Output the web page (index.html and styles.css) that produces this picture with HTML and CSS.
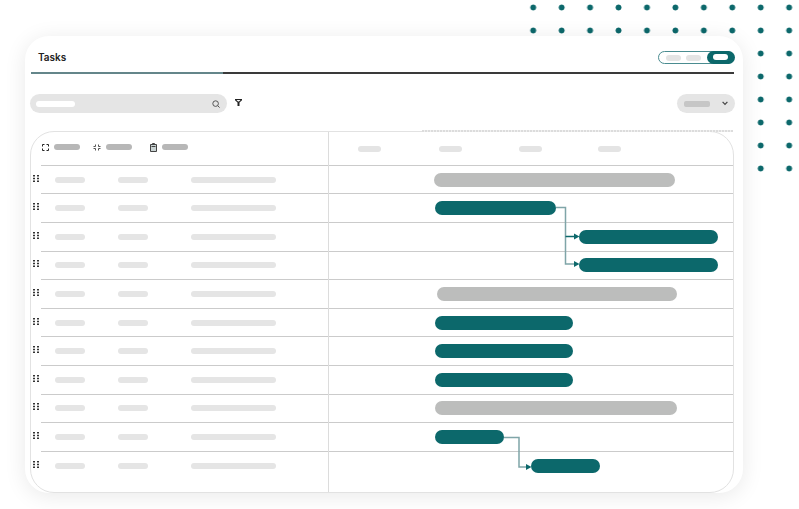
FILE: index.html
```html
<!DOCTYPE html>
<html lang="en">
  <head>
    <meta charset="UTF-8" />
    <title>Tasks</title>
    <link rel="stylesheet" href="styles.css">
  </head>
  <body>
    <svg width="0" height="0" class="defs">
      <symbol id="grip" viewBox="0 0 6 7">
        <rect x="0" y="0" width="2" height="1.500" /><rect x="4" y="0" width="2" height="1.500" />
        <rect x="0" y="2.750" width="2" height="1.500" /><rect x="4" y="2.750" width="2" height="1.500" />
        <rect x="0" y="5.500" width="2" height="1.500" /><rect x="4" y="5.500" width="2" height="1.500" />
      </symbol>
    </svg>

    <div class="dots"></div>

    <main class="card">
      <header class="card-head">
        <h1>Tasks</h1>
        <div class="toggle">
          <span class="toggle-pill"></span>
          <span class="toggle-pill"></span>
          <span class="toggle-on"><span></span></span>
        </div>
      </header>

      <div class="toolbar">
        <div class="search">
          <span class="search-text"></span>
          <svg width="8" height="8" viewBox="0 0 8 8" fill="none" stroke="#555" stroke-width="1">
            <circle cx="3.600" cy="3.600" r="2.800" /><path d="M5.700 5.700 7.600 7.600" />
          </svg>
        </div>
        <svg class="filter" width="7" height="7" viewBox="0 0 7 7" fill="#222">
          <path d="M0 0h7v1.200L4.500 3.600V7h-2V3.600L0 1.200zM1.500 1.100 3 2.600h1L5.500 1.100z" fill-rule="evenodd" />
        </svg>
        <div class="select">
          <span class="select-text"></span>
          <svg width="6" height="5" viewBox="0 0 6 5" fill="none" stroke="#444" stroke-width="1.200">
            <path d="M.6.8 3 3.400 5.400.8" />
          </svg>
        </div>
      </div>

      <section class="table">
        <div class="table-head">
          <div class="head-left">
            <span class="head-item">
              <svg width="7" height="7" viewBox="0 0 7 7" fill="none" stroke="#222"><path d="M.5 2.500v-2h2M4.500.5h2v2M6.500 4.500v2h-2M2.500 6.500h-2v-2" /></svg>
              <span class="pill-head"></span>
            </span>
            <span class="head-item head-item-mid">
              <svg width="8" height="7" viewBox="0 0 8 7" fill="none" stroke="#555"><path d="M.5 2.500h2v-2M5.500.5v2h2M7.500 4.500h-2v2M2.500 6.500v-2h-2" /></svg>
              <span class="pill-head"></span>
            </span>
            <span class="head-item head-item-last">
              <svg width="7" height="9" viewBox="0 0 7 9" fill="#c9d3d3" stroke="#444"><path d="M.5 1.500h6v7h-6zM2.500 1.500v-1h2v1z" /><path d="M1.500 3.500h4" /></svg>
              <span class="pill-head"></span>
            </span>
          </div>
          <div class="head-right">
            <span class="pill-date"></span>
            <span class="pill-date"></span>
            <span class="pill-date"></span>
            <span class="pill-date"></span>
          </div>
        </div>

        <div class="row">
          <svg class="grip"><use href="#grip" /></svg>
          <div class="row-body">
            <div class="cells"><span class="pill"></span><span class="pill"></span><span class="pill pill-long"></span></div>
            <div class="track"><span class="bar bar-grey" style="margin-left:105px;width:241px"></span></div>
          </div>
        </div>
        <div class="row">
          <svg class="grip"><use href="#grip" /></svg>
          <div class="row-body">
            <div class="cells"><span class="pill"></span><span class="pill"></span><span class="pill pill-long"></span></div>
            <div class="track"><span class="bar" style="margin-left:106px;width:121px"></span></div>
          </div>
        </div>
        <div class="row">
          <svg class="grip"><use href="#grip" /></svg>
          <div class="row-body">
            <div class="cells"><span class="pill"></span><span class="pill"></span><span class="pill pill-long"></span></div>
            <div class="track"><span class="bar" style="margin-left:250px;width:139px"></span></div>
          </div>
        </div>
        <div class="row">
          <svg class="grip"><use href="#grip" /></svg>
          <div class="row-body">
            <div class="cells"><span class="pill"></span><span class="pill"></span><span class="pill pill-long"></span></div>
            <div class="track"><span class="bar" style="margin-left:250px;width:139px"></span></div>
          </div>
        </div>
        <div class="row">
          <svg class="grip"><use href="#grip" /></svg>
          <div class="row-body">
            <div class="cells"><span class="pill"></span><span class="pill"></span><span class="pill pill-long"></span></div>
            <div class="track"><span class="bar bar-grey" style="margin-left:108px;width:240px"></span></div>
          </div>
        </div>
        <div class="row">
          <svg class="grip"><use href="#grip" /></svg>
          <div class="row-body">
            <div class="cells"><span class="pill"></span><span class="pill"></span><span class="pill pill-long"></span></div>
            <div class="track"><span class="bar" style="margin-left:106px;width:138px"></span></div>
          </div>
        </div>
        <div class="row">
          <svg class="grip"><use href="#grip" /></svg>
          <div class="row-body">
            <div class="cells"><span class="pill"></span><span class="pill"></span><span class="pill pill-long"></span></div>
            <div class="track"><span class="bar" style="margin-left:106px;width:138px"></span></div>
          </div>
        </div>
        <div class="row">
          <svg class="grip"><use href="#grip" /></svg>
          <div class="row-body">
            <div class="cells"><span class="pill"></span><span class="pill"></span><span class="pill pill-long"></span></div>
            <div class="track"><span class="bar" style="margin-left:106px;width:138px"></span></div>
          </div>
        </div>
        <div class="row">
          <svg class="grip"><use href="#grip" /></svg>
          <div class="row-body">
            <div class="cells"><span class="pill"></span><span class="pill"></span><span class="pill pill-long"></span></div>
            <div class="track"><span class="bar bar-grey" style="margin-left:106px;width:242px"></span></div>
          </div>
        </div>
        <div class="row">
          <svg class="grip"><use href="#grip" /></svg>
          <div class="row-body">
            <div class="cells"><span class="pill"></span><span class="pill"></span><span class="pill pill-long"></span></div>
            <div class="track"><span class="bar" style="margin-left:106px;width:69px"></span></div>
          </div>
        </div>
        <div class="row">
          <svg class="grip"><use href="#grip" /></svg>
          <div class="row-body">
            <div class="cells"><span class="pill"></span><span class="pill"></span><span class="pill pill-long"></span></div>
            <div class="track"><span class="bar" style="margin-left:202px;width:69px"></span></div>
          </div>
        </div>

        <!-- links between bars, viewBox uses page coordinates -->
        <svg class="links" viewBox="31 132 702 360" fill="none" stroke-width="1.500">
          <path d="M556 207.500H565.500V264H575" stroke="#7fa5a8" />
          <path d="M565.500 236.500H575" stroke="#0c686b" />
          <path d="M504 437.500H519V467H527" stroke="#7fa5a8" />
          <path d="M574 233.500 579.500 236.500 574 239.500z" fill="#0c686b" />
          <path d="M574 261 579.500 264 574 267z" fill="#0c686b" />
          <path d="M526 464 531.500 467 526 470z" fill="#0c686b" />
        </svg>
      </section>
    </main>
  </body>
</html>
```

FILE: styles.css
```css
* {
  box-sizing: border-box;
}
body {
  margin: 0;
  height: 509px;
  overflow: hidden;
  position: relative;
  background-color: #fff;
  font-family: Inter, "Open Sans", sans-serif;
}
.defs {
  position: absolute;
}
.dots {
  position: absolute;
  left: 519px;
  top: -4px;
  width: 280px;
  height: 184px;
  background-image: radial-gradient(circle, #0c686b 2.6px, transparent 3.3px);
  background-size: 28.44px 23px;
}
.card {
  position: relative;
  margin-left: 25px;
  top: 36px;
  width: 718px;
  height: 457px;
  padding: 0 9px 0 5px;
  display: flex;
  flex-direction: column;
  background-color: #fff;
  border-radius: 24px;
  box-shadow: 0 3px 22px rgba(0, 0, 0, 0.09);
}
.card-head {
  height: 38px;
  margin-left: 1px;
  padding: 15px 0 0 7px;
  display: flex;
  justify-content: space-between;
  background: linear-gradient(90deg, #64868a 192px, #3a3a3a 192px) bottom / 100% 2px no-repeat;
}
.card-head h1 {
  margin: 0;
  font-size: 10px;
  line-height: 13px;
  font-weight: 600;
  color: #222;
}
.toggle {
  width: 76px;
  height: 13px;
  padding-left: 7px;
  display: flex;
  align-items: center;
  gap: 5px;
  border: 1.5px solid #4a8c90;
  border-radius: 7px;
  position: relative;
}
.toggle-pill {
  width: 15px;
  height: 6px;
  border-radius: 3px;
  background-color: #e4e4e4;
}
.toggle-on {
  position: absolute;
  right: -1.5px;
  top: -1.5px;
  width: 28px;
  height: 13px;
  border-radius: 7px;
  background-color: #0c686b;
  display: flex;
  align-items: center;
  justify-content: center;
}
.toggle-on span {
  width: 15px;
  height: 6px;
  border-radius: 3px;
  background-color: #fff;
}
.toolbar {
  margin-top: 20px;
  height: 19px;
  display: flex;
  align-items: center;
}
.search {
  width: 197px;
  height: 19px;
  padding: 0 7px 0 6px;
  display: flex;
  align-items: center;
  justify-content: space-between;
  background-color: #e5e5e5;
  border-radius: 10px;
}
.search-text {
  width: 39px;
  height: 6px;
  border-radius: 3px;
  background-color: #fff;
}
.filter {
  margin: -2px 0 0 8px;
}
.select {
  margin-left: auto;
  margin-right: -1px;
  width: 58px;
  height: 19px;
  padding: 0 7px;
  display: flex;
  align-items: center;
  justify-content: space-between;
  background-color: #e5e5e5;
  border-radius: 10px;
}
.select-text {
  width: 26px;
  height: 6px;
  border-radius: 2px;
  background-color: #c6c6c6;
}
.table {
  position: relative;
  margin-top: 18px;
  flex: 1;
  border: 1px solid #e2e2e2;
  border-radius: 24px;
}
.table::before {
  content: "";
  position: absolute;
  left: 391px;
  right: 0;
  top: -2px;
  height: 2px;
  background: repeating-linear-gradient(90deg, #dcdcdc 0 2px, #f0f0f0 2px 3px);
}
.table::after {
  content: "";
  position: absolute;
  left: 297px;
  top: 0;
  bottom: 0;
  border-left: 1px solid #dcdcdc;
}
.table-head {
  height: 32.8px;
  display: flex;
  align-items: center;
  padding-bottom: 2px;
}
.head-left {
  width: 298px;
  padding-left: 11px;
  display: flex;
  align-items: center;
}
.head-item {
  display: flex;
  align-items: center;
  gap: 5px;
}
.head-item-mid {
  margin-left: 13px;
}
.head-item-last {
  margin-left: 18px;
}
.pill-head {
  width: 26px;
  height: 6px;
  border-radius: 3px;
  background-color: #b7b7b7;
}
.head-right {
  display: flex;
  padding-left: 29px;
  gap: 57px;
  margin-top: 3px;
}
.pill-date {
  width: 23px;
  height: 6px;
  border-radius: 3px;
  background-color: #e4e4e4;
}
.pill-date:nth-child(2) {
  margin-left: 1px;
}
.pill-date:nth-child(4) {
  margin-left: -1px;
}
.row {
  height: 28.6px;
  display: flex;
  align-items: center;
}
.grip {
  width: 6px;
  height: 7px;
  margin: -2px 2px 0 2px;
  flex: none;
  fill: #333;
}
.row-body {
  flex: 1;
  height: 100%;
  display: flex;
  align-items: center;
  border-top: 1px solid #cbcbcb;
}
.cells {
  width: 288px;
  padding-left: 14px;
  display: grid;
  grid-template-columns: 63px 73px 1fr;
}
.pill {
  width: 30px;
  height: 6px;
  border-radius: 3px;
  background-color: #e5e5e5;
}
.pill-long {
  width: 85px;
}
.track {
  flex: 1;
  display: flex;
}
.bar {
  height: 14px;
  border-radius: 7px;
  background-color: #0c686b;
}
.bar-grey {
  background-color: #bcbdbc;
}
.links {
  position: absolute;
  left: 0;
  top: 0;
  width: 702px;
  height: 360px;
}
```
